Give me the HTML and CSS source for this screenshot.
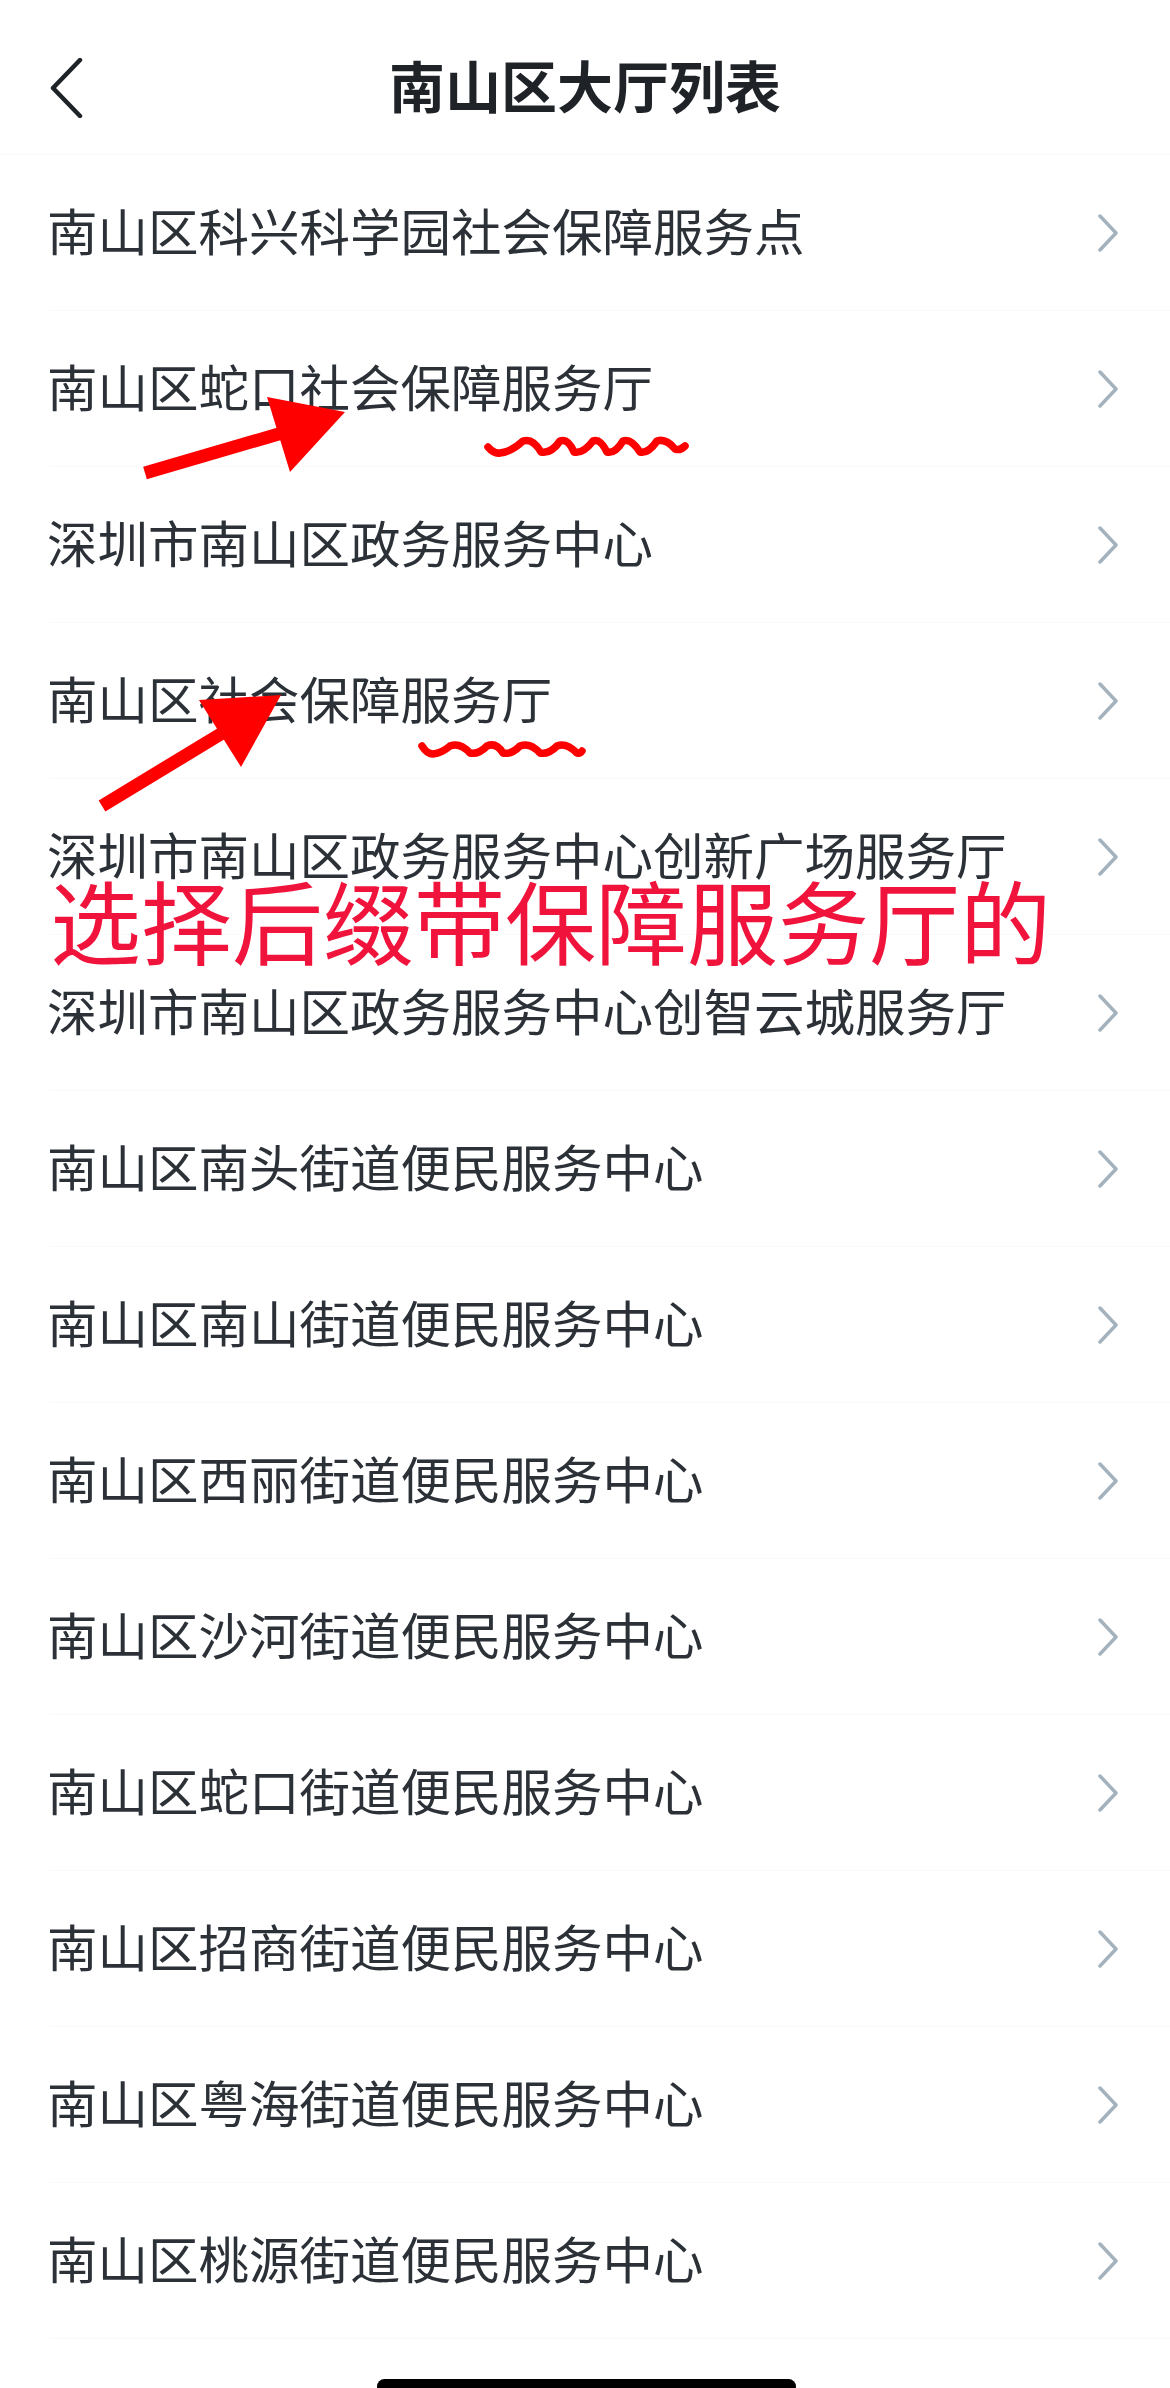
FILE: index.html
```html
<!DOCTYPE html>
<html lang="zh-CN">
<head>
<meta charset="utf-8">
<title>南山区大厅列表</title>
<link rel="stylesheet" href="styles.css">
</head>
<body>
<div class="page">
  <header class="nav">
    <span class="back">
      <svg width="34" height="60" viewBox="0 0 34 60"><path d="M31 2 L4 30 L31 58" fill="none" stroke="#1f2328" stroke-width="4.5" stroke-linecap="round" stroke-linejoin="round"/></svg>
    </span>
    <h1 class="title">南山区大厅列表</h1>
  </header>
  <ul class="list">
    <li class="row"><div class="row-inner"><span class="name">南山区科兴科学园社会保障服务点</span><svg class="chev" width="22" height="38" viewBox="0 0 22 38"><path d="M3 2 L19 19 L3 36" fill="none" stroke="#a3b2bd" stroke-width="3.5" stroke-linecap="round" stroke-linejoin="round"/></svg></div></li>
    <li class="row"><div class="row-inner"><span class="name">南山区蛇口社会保障服务厅</span><svg class="chev" width="22" height="38" viewBox="0 0 22 38"><path d="M3 2 L19 19 L3 36" fill="none" stroke="#a3b2bd" stroke-width="3.5" stroke-linecap="round" stroke-linejoin="round"/></svg></div></li>
    <li class="row"><div class="row-inner"><span class="name">深圳市南山区政务服务中心</span><svg class="chev" width="22" height="38" viewBox="0 0 22 38"><path d="M3 2 L19 19 L3 36" fill="none" stroke="#a3b2bd" stroke-width="3.5" stroke-linecap="round" stroke-linejoin="round"/></svg></div></li>
    <li class="row"><div class="row-inner"><span class="name">南山区社会保障服务厅</span><svg class="chev" width="22" height="38" viewBox="0 0 22 38"><path d="M3 2 L19 19 L3 36" fill="none" stroke="#a3b2bd" stroke-width="3.5" stroke-linecap="round" stroke-linejoin="round"/></svg></div></li>
    <li class="row"><div class="row-inner"><span class="name">深圳市南山区政务服务中心创新广场服务厅</span><svg class="chev" width="22" height="38" viewBox="0 0 22 38"><path d="M3 2 L19 19 L3 36" fill="none" stroke="#a3b2bd" stroke-width="3.5" stroke-linecap="round" stroke-linejoin="round"/></svg></div></li>
    <li class="row"><div class="row-inner"><span class="name">深圳市南山区政务服务中心创智云城服务厅</span><svg class="chev" width="22" height="38" viewBox="0 0 22 38"><path d="M3 2 L19 19 L3 36" fill="none" stroke="#a3b2bd" stroke-width="3.5" stroke-linecap="round" stroke-linejoin="round"/></svg></div></li>
    <li class="row"><div class="row-inner"><span class="name">南山区南头街道便民服务中心</span><svg class="chev" width="22" height="38" viewBox="0 0 22 38"><path d="M3 2 L19 19 L3 36" fill="none" stroke="#a3b2bd" stroke-width="3.5" stroke-linecap="round" stroke-linejoin="round"/></svg></div></li>
    <li class="row"><div class="row-inner"><span class="name">南山区南山街道便民服务中心</span><svg class="chev" width="22" height="38" viewBox="0 0 22 38"><path d="M3 2 L19 19 L3 36" fill="none" stroke="#a3b2bd" stroke-width="3.5" stroke-linecap="round" stroke-linejoin="round"/></svg></div></li>
    <li class="row"><div class="row-inner"><span class="name">南山区西丽街道便民服务中心</span><svg class="chev" width="22" height="38" viewBox="0 0 22 38"><path d="M3 2 L19 19 L3 36" fill="none" stroke="#a3b2bd" stroke-width="3.5" stroke-linecap="round" stroke-linejoin="round"/></svg></div></li>
    <li class="row"><div class="row-inner"><span class="name">南山区沙河街道便民服务中心</span><svg class="chev" width="22" height="38" viewBox="0 0 22 38"><path d="M3 2 L19 19 L3 36" fill="none" stroke="#a3b2bd" stroke-width="3.5" stroke-linecap="round" stroke-linejoin="round"/></svg></div></li>
    <li class="row"><div class="row-inner"><span class="name">南山区蛇口街道便民服务中心</span><svg class="chev" width="22" height="38" viewBox="0 0 22 38"><path d="M3 2 L19 19 L3 36" fill="none" stroke="#a3b2bd" stroke-width="3.5" stroke-linecap="round" stroke-linejoin="round"/></svg></div></li>
    <li class="row"><div class="row-inner"><span class="name">南山区招商街道便民服务中心</span><svg class="chev" width="22" height="38" viewBox="0 0 22 38"><path d="M3 2 L19 19 L3 36" fill="none" stroke="#a3b2bd" stroke-width="3.5" stroke-linecap="round" stroke-linejoin="round"/></svg></div></li>
    <li class="row"><div class="row-inner"><span class="name">南山区粤海街道便民服务中心</span><svg class="chev" width="22" height="38" viewBox="0 0 22 38"><path d="M3 2 L19 19 L3 36" fill="none" stroke="#a3b2bd" stroke-width="3.5" stroke-linecap="round" stroke-linejoin="round"/></svg></div></li>
    <li class="row"><div class="row-inner"><span class="name">南山区桃源街道便民服务中心</span><svg class="chev" width="22" height="38" viewBox="0 0 22 38"><path d="M3 2 L19 19 L3 36" fill="none" stroke="#a3b2bd" stroke-width="3.5" stroke-linecap="round" stroke-linejoin="round"/></svg></div></li>
  </ul>
  <footer class="home-area"><div class="home-bar"></div></footer>

  <svg class="marks" width="1170" height="1000" viewBox="0 0 1170 1000">
    <line x1="145" y1="473" x2="282" y2="433" stroke="#ff0000" stroke-width="13"/>
    <polygon points="267,397 345,412 290,472" fill="#ff0000"/>
    <path d="M488 447 Q494 454 500 453 Q511 452 523 441 Q533 438 541 452 Q551 454 560 441 Q568 438 574 452 Q583 454 593 441 Q600 438 607 452 Q615 454 623 441 Q631 438 640 452 Q648 454 657 441 Q666 438 675 449 Q680 451 685 446" fill="none" stroke="#ff0000" stroke-width="7.5" stroke-linecap="round" stroke-linejoin="round"/>
    <line x1="102" y1="806" x2="224" y2="732" stroke="#ff0000" stroke-width="13"/>
    <polygon points="199,700 281,695 241,767" fill="#ff0000"/>
    <path d="M422 746 Q427 754 433 754 Q442 753 450 746 Q460 742 470 753 Q478 755 487 746 Q496 742 503 753 Q511 755 520 746 Q530 742 540 753 Q548 755 557 746 Q566 742 577 753 Q580 754 582 751" fill="none" stroke="#ff0000" stroke-width="7.5" stroke-linecap="round" stroke-linejoin="round"/>
  </svg>
  <div class="note">选择后缀带保障服务厅的</div>
</div>
</body>
</html>
```

FILE: styles.css
```css
html, body {
  margin: 0;
  padding: 0;
  background: #ffffff;
}
body {
  width: 1170px;
  height: 2388px;
  overflow: hidden;
  font-family: "Noto Sans CJK SC", "Noto Sans", sans-serif;
}
.page {
  position: relative;
  width: 1170px;
  height: 2388px;
  overflow: hidden;
}
.nav {
  box-sizing: border-box;
  height: 155px;
  padding-top: 14px;
  display: flex;
  align-items: center;
  justify-content: center;
  position: relative;
  border-bottom: 1px solid #fafafa;
}
.back {
  position: absolute;
  left: 49px;
  top: 58px;
  width: 34px;
  height: 60px;
  display: block;
}
.back svg { display: block; }
.title {
  margin: 0;
  font-size: 56px;
  font-weight: 700;
  color: #1f2328;
  line-height: 1;
}
.list {
  list-style: none;
  margin: 0;
  padding: 0;
}
.row {
  padding-left: 49px;
}
.row-inner {
  box-sizing: border-box;
  height: 156px;
  display: flex;
  align-items: center;
  justify-content: space-between;
  padding-right: 53px;
  border-bottom: 1px solid #fafafa;
}
.name {
  font-size: 50.5px;
  line-height: 1.2;
  color: #2b3137;
  margin-left: -2px;
  position: relative;
  top: -3px;
}
.chev {
  display: block;
  margin-right: -2px;
}
.home-area {
  padding-top: 40px;
  display: flex;
  justify-content: center;
}
.home-bar {
  width: 419px;
  height: 15px;
  border-radius: 8px;
  background: #000000;
  margin-left: 3px;
}
.marks {
  position: absolute;
  left: 0;
  top: 0;
  pointer-events: none;
}
.note {
  position: absolute;
  left: 50px;
  top: 864px;
  font-size: 91px;
  line-height: 1.2;
  color: #f0143c;
  white-space: nowrap;
}
```
